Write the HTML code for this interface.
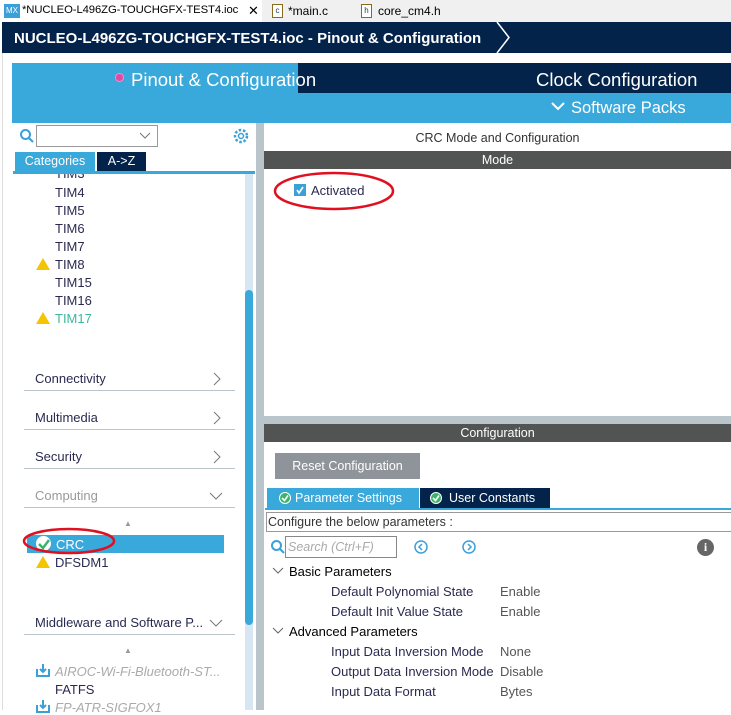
<!DOCTYPE html>
<html><head><style>
*{box-sizing:border-box;margin:0;padding:0}
body{width:731px;height:710px;overflow:hidden;background:#fff;font-family:"Liberation Sans",Arial,sans-serif;position:relative}
.a{position:absolute}
.t{font-size:13px;color:#333;white-space:nowrap}
.sec{position:absolute;left:24px;width:211px;border-bottom:1px solid #b9c4cb;font-size:13px;color:#2a2a50;padding-left:11px;height:20px}
.sec svg{position:absolute;right:14px;top:1px}
.warn{position:absolute;width:0;height:0;border-left:7px solid transparent;border-right:7px solid transparent;border-bottom:12px solid #f5c400}
</style></head><body>
<div class="a" style="left:0;top:0;width:731px;height:22px;background:#f0f0f0"></div>
<div class="a" style="left:0;top:0;width:262px;height:22px;background:#fff"></div>
<div class="a" style="left:4px;top:4px;width:16px;height:14px;background:#3b9fd8;color:#fff;font-size:8px;text-align:center;line-height:14px">MX</div>
<div class="a t" style="left:22px;top:4px;font-size:11.3px;color:#000;letter-spacing:-0.1px">*NUCLEO-L496ZG-TOUCHGFX-TEST4.ioc</div>
<div class="a t" style="left:248px;top:3px;font-size:13px;color:#000">✕</div>
<div class="a" style="left:272px;top:4px;width:11px;height:14px;border:1px solid #8a6a20;background:#fff;font-size:8px;line-height:12px;text-align:center;color:#235">c</div>
<div class="a t" style="left:288px;top:4px;font-size:12px;color:#000">*main.c</div>
<div class="a" style="left:361px;top:4px;width:11px;height:14px;border:1px solid #8a6a20;background:#fff;font-size:8px;line-height:12px;text-align:center;color:#235">h</div>
<div class="a t" style="left:378px;top:4px;font-size:12px;color:#000">core_cm4.h</div>
<div class="a" style="left:2px;top:22px;width:729px;height:31px;background:#03234b"></div>
<div class="a" style="left:14px;top:30px;color:#fff;font-weight:bold;font-size:15px;white-space:nowrap">NUCLEO-L496ZG-TOUCHGFX-TEST4.ioc - Pinout &amp; Configuration</div>
<svg class="a" style="left:495px;top:22px" width="24" height="31"><polyline points="2,0 14,15.5 2,31" fill="none" stroke="#fff" stroke-width="1.5"/></svg>
<div class="a" style="left:2px;top:53px;width:1px;height:657px;background:#ddd"></div>
<div class="a" style="left:12px;top:63px;width:719px;height:60px;background:#39a8db"></div>
<div class="a" style="left:298px;top:63px;width:433px;height:30px;background:#03234b"></div>
<div class="a" style="left:115px;top:73px;width:9px;height:9px;border-radius:50%;background:#e04aa0;border:1px solid #f8c"></div>
<div class="a" style="left:131px;top:69px;color:#fff;font-size:18.5px">Pinout &amp; Configuration</div>
<div class="a" style="left:536px;top:69px;color:#fff;font-size:18.5px">Clock Configuration</div>
<div class="a" style="left:571px;top:99px;color:#fff;font-size:16.5px">Software Packs</div>
<svg class="a" style="left:551px;top:102px" width="14" height="10"><polyline points="1,1 7,7 13,1" fill="none" stroke="#fff" stroke-width="2"/></svg>
<svg class="a" style="left:19px;top:128px" width="16" height="16"><circle cx="6.5" cy="6.5" r="4.5" fill="none" stroke="#3b9fd8" stroke-width="2"/><line x1="10" y1="10" x2="14" y2="14" stroke="#3b9fd8" stroke-width="2"/></svg>
<div class="a" style="left:36px;top:125px;width:122px;height:22px;border:1px solid #999"></div>
<svg class="a" style="left:139px;top:132px" width="12" height="8"><polyline points="1,1 6,6 11,1" fill="none" stroke="#777"/></svg>
<svg class="a" style="left:232px;top:127px" width="18" height="18"><circle cx="9" cy="9" r="6" fill="none" stroke="#3b9fd8" stroke-width="2.5" stroke-dasharray="2.5 1.8"/><circle cx="9" cy="9" r="2.5" fill="none" stroke="#3b9fd8" stroke-width="1.5"/></svg>
<div class="a" style="left:15px;top:152px;width:80px;height:19px;background:#39a8db;color:#fff;font-size:12.5px;text-align:center;line-height:19px">Categories</div>
<div class="a" style="left:97px;top:152px;width:49px;height:19px;background:#03234b;color:#fff;font-size:12.5px;text-align:center;line-height:19px">A-&gt;Z</div>
<div class="a" style="left:13px;top:171px;width:242px;height:3px;background:#39a8db"></div>
<div class="a" style="left:245px;top:174px;width:8px;height:536px;background:#d6e6f3"></div>
<div class="a" style="left:245px;top:290px;width:8px;height:335px;background:#39a8db;border-radius:4px"></div>
<div class="a" style="left:256px;top:123px;width:8px;height:587px;background:#b9c4cb"></div>
<div class="a" style="left:14px;top:174px;width:230px;height:6px;overflow:hidden"><div class="t" style="margin:-8px 0 0 41px;color:#2a2a50">TIM3</div></div>
<div class="a t" style="left:55px;top:185px;color:#2a2a50">TIM4</div>
<div class="a t" style="left:55px;top:203px;color:#2a2a50">TIM5</div>
<div class="a t" style="left:55px;top:221px;color:#2a2a50">TIM6</div>
<div class="a t" style="left:55px;top:239px;color:#2a2a50">TIM7</div>
<div class="warn" style="left:36px;top:258px"></div>
<div class="a t" style="left:55px;top:257px;color:#2a2a50">TIM8</div>
<div class="a t" style="left:55px;top:275px;color:#2a2a50">TIM15</div>
<div class="a t" style="left:55px;top:293px;color:#2a2a50">TIM16</div>
<div class="warn" style="left:36px;top:312px"></div>
<div class="a t" style="left:55px;top:311px;color:#3cb89a">TIM17</div>
<div class="sec" style="top:371px">Connectivity<svg width="8" height="14"><polyline points="1,1 7,7 1,13" fill="none" stroke="#777"/></svg></div>
<div class="sec" style="top:410px">Multimedia<svg width="8" height="14"><polyline points="1,1 7,7 1,13" fill="none" stroke="#777"/></svg></div>
<div class="sec" style="top:449px">Security<svg width="8" height="14"><polyline points="1,1 7,7 1,13" fill="none" stroke="#777"/></svg></div>
<div class="sec" style="top:488px;color:#999">Computing<svg width="14" height="12" style="top:3px;right:12px"><polyline points="1,2 7,8 13,2" fill="none" stroke="#777"/></svg></div>
<div class="a" style="left:124px;top:519px;font-size:8px;color:#999">▲</div>
<div class="a" style="left:27px;top:535px;width:197px;height:18px;background:#39a8db"></div>
<div class="a" style="left:36px;top:536px;width:15px;height:15px;border-radius:50%;background:#fff"></div>
<svg class="a" style="left:37px;top:537px" width="14" height="14"><polyline points="2,7 6,11 12,3" fill="none" stroke="#3cb36a" stroke-width="2.5"/></svg>
<div class="a t" style="left:56px;top:537px;color:#fff">CRC</div>
<div class="warn" style="left:36px;top:556px"></div>
<div class="a t" style="left:55px;top:555px;color:#2a2a50">DFSDM1</div>
<div class="sec" style="top:615px">Middleware and Software P...<svg width="14" height="12" style="top:3px;right:12px"><polyline points="1,2 7,8 13,2" fill="none" stroke="#777"/></svg></div>
<div class="a" style="left:124px;top:646px;font-size:8px;color:#999">▲</div>
<svg class="a" style="left:36px;top:663px" width="14" height="15"><path d="M1 6v7h12V6" fill="none" stroke="#3b9fd8" stroke-width="2"/><path d="M7 1v8M4 6l3 3 3-3" fill="none" stroke="#3b9fd8" stroke-width="2"/></svg>
<div class="a t" style="left:55px;top:664px;color:#aaa;font-style:italic">AIROC-Wi-Fi-Bluetooth-ST...</div>
<div class="a t" style="left:55px;top:682px;color:#2a2a50">FATFS</div>
<svg class="a" style="left:36px;top:699px" width="14" height="15"><path d="M1 6v7h12V6" fill="none" stroke="#3b9fd8" stroke-width="2"/><path d="M7 1v8M4 6l3 3 3-3" fill="none" stroke="#3b9fd8" stroke-width="2"/></svg>
<div class="a t" style="left:55px;top:700px;color:#aaa;font-style:italic">FP-ATR-SIGFOX1</div>
<svg class="a" style="left:22px;top:526px" width="96" height="30"><ellipse cx="47" cy="15" rx="45" ry="12" fill="none" stroke="#e01020" stroke-width="2.5"/></svg>
<div class="a t" style="left:264px;top:131px;width:467px;text-align:center;font-size:12.5px">CRC Mode and Configuration</div>
<div class="a" style="left:264px;top:151px;width:467px;height:18px;background:#525453;color:#fff;font-size:12.5px;text-align:center;line-height:18px">Mode</div>
<div class="a" style="left:294px;top:184px;width:12px;height:12px;background:#3b9fd8"></div>
<svg class="a" style="left:295px;top:185px" width="10" height="10"><polyline points="2,5 4,8 8,2" fill="none" stroke="#fff" stroke-width="1.6"/></svg>
<div class="a t" style="left:311px;top:183px;color:#2a2a50">Activated</div>
<svg class="a" style="left:272px;top:170px" width="124" height="44"><ellipse cx="62" cy="21" rx="59" ry="18" fill="none" stroke="#e01020" stroke-width="2.5"/></svg>
<div class="a" style="left:264px;top:416px;width:467px;height:8px;background:#b9c4cb"></div>
<div class="a" style="left:264px;top:424px;width:467px;height:18px;background:#525453;color:#fff;font-size:12.5px;text-align:center;line-height:18px">Configuration</div>
<div class="a" style="left:275px;top:453px;width:145px;height:26px;background:#8e9499;color:#fff;font-size:12.5px;text-align:center;line-height:26px">Reset Configuration</div>
<div class="a" style="left:267px;top:488px;width:152px;height:20px;background:#39a8db;color:#fff;font-size:12.5px;line-height:20px;padding-left:28px">Parameter Settings</div>
<div class="a" style="left:420px;top:488px;width:130px;height:20px;background:#03234b;color:#fff;font-size:12.5px;line-height:20px;padding-left:29px">User Constants</div>
<svg class="a" style="left:278px;top:491px" width="14" height="14"><circle cx="7" cy="7" r="6" fill="#fff"/><circle cx="7" cy="7" r="5" fill="#3cb36a"/><polyline points="4,7 6.5,9.5 10,4.5" fill="none" stroke="#fff" stroke-width="1.6"/></svg>
<svg class="a" style="left:429px;top:491px" width="14" height="14"><circle cx="7" cy="7" r="6" fill="#fff"/><circle cx="7" cy="7" r="5" fill="#3cb36a"/><polyline points="4,7 6.5,9.5 10,4.5" fill="none" stroke="#fff" stroke-width="1.6"/></svg>
<div class="a" style="left:265px;top:508px;width:466px;height:2px;background:#39a8db"></div>
<div class="a" style="left:266px;top:512px;width:470px;height:20px;border:1px solid #999;font-size:12.5px;color:#333;padding-left:1px;line-height:18px">Configure the below parameters :</div>
<svg class="a" style="left:270px;top:539px" width="16" height="16"><circle cx="6.5" cy="6.5" r="4.5" fill="none" stroke="#3b9fd8" stroke-width="2"/><line x1="10" y1="10" x2="14" y2="14" stroke="#3b9fd8" stroke-width="2"/></svg>
<div class="a" style="left:285px;top:536px;width:112px;height:22px;border:1px solid #888;font-size:12.5px;color:#aaa;font-style:italic;padding-left:2px;line-height:20px">Search (Ctrl+F)</div>
<svg class="a" style="left:414px;top:540px" width="14" height="14"><circle cx="7" cy="7" r="6" fill="none" stroke="#3b9fd8" stroke-width="1.5"/><polyline points="8,4 5,7 8,10" fill="none" stroke="#3b9fd8" stroke-width="1.5"/></svg>
<svg class="a" style="left:462px;top:540px" width="14" height="14"><circle cx="7" cy="7" r="6" fill="none" stroke="#3b9fd8" stroke-width="1.5"/><polyline points="6,4 9,7 6,10" fill="none" stroke="#3b9fd8" stroke-width="1.5"/></svg>
<div class="a" style="left:697px;top:539px;width:17px;height:17px;border-radius:50%;background:#666;color:#fff;font-weight:bold;font-size:12px;text-align:center;line-height:17px;font-family:'Liberation Serif',serif">i</div>
<svg class="a" style="left:272px;top:567px" width="12" height="8"><polyline points="1,1 6,6 11,1" fill="none" stroke="#666"/></svg>
<div class="a t" style="left:289px;top:564px;color:#000">Basic Parameters</div>
<div class="a t" style="left:331px;top:584px;color:#2a2a50">Default Polynomial State</div><div class="a t" style="left:500px;top:584px;color:#555">Enable</div>
<div class="a t" style="left:331px;top:604px;color:#2a2a50">Default Init Value State</div><div class="a t" style="left:500px;top:604px;color:#555">Enable</div>
<svg class="a" style="left:272px;top:627px" width="12" height="8"><polyline points="1,1 6,6 11,1" fill="none" stroke="#666"/></svg>
<div class="a t" style="left:289px;top:624px;color:#000">Advanced Parameters</div>
<div class="a t" style="left:331px;top:644px;color:#2a2a50">Input Data Inversion Mode</div><div class="a t" style="left:500px;top:644px;color:#555">None</div>
<div class="a t" style="left:331px;top:664px;color:#2a2a50">Output Data Inversion Mode</div><div class="a t" style="left:500px;top:664px;color:#555">Disable</div>
<div class="a t" style="left:331px;top:684px;color:#2a2a50">Input Data Format</div><div class="a t" style="left:500px;top:684px;color:#555">Bytes</div>
</body></html>
